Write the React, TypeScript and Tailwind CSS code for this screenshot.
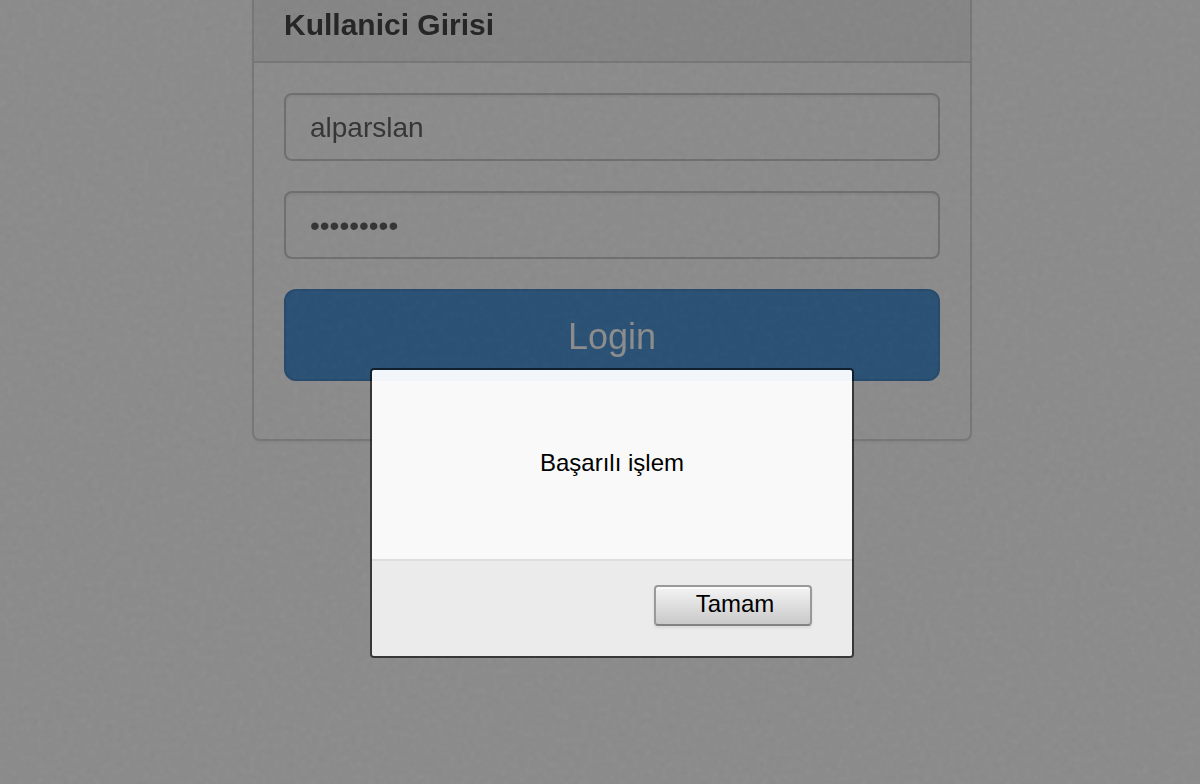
import React, { useState } from "react";

function Grain() {
  return (
    <svg
      aria-hidden="true"
      className="pointer-events-none absolute inset-0 h-full w-full opacity-5 mix-blend-overlay"
    >
      <filter id="grain" x="0" y="0" width="100%" height="100%" colorInterpolationFilters="sRGB">
        <feTurbulence type="fractalNoise" baseFrequency="0.16" numOctaves="3" seed="4" />
        <feColorMatrix type="saturate" values="0" />
        <feComponentTransfer>
          <feFuncA type="linear" slope="0" intercept="1" />
        </feComponentTransfer>
      </filter>
      <rect width="100%" height="100%" filter="url(#grain)" />
    </svg>
  );
}

const fieldClass =
  "block h-[68px] w-full rounded-lg border-2 border-[#6f6f6f] bg-transparent px-6 pt-0.5 text-[28px] text-[#363636] shadow-[inset_0_2px_2px_rgba(0,0,0,0.05)] outline-none";

export default function App() {
  const [open, setOpen] = useState(true);
  const [user, setUser] = useState("alparslan");
  const [password, setPassword] = useState("alparslan");

  return (
    <div className="relative min-h-screen overflow-hidden bg-[#8b8b8b] pl-6 font-['Liberation_Sans',Arial,sans-serif]">
      <main className="mx-auto w-full max-w-[720px] rounded-b-lg border-x-2 border-b-2 border-[#777777] shadow-[0_2px_2px_rgba(0,0,0,0.04)]">
        <header className="border-b-2 border-[#777777] bg-[#858585] px-[30px] pt-1 pb-4">
          <h1 className="text-[30px] leading-[41px] font-bold text-[#262626]">Kullanici Girisi</h1>
        </header>
        <form className="flex flex-col gap-[30px] px-[30px] pt-[30px] pb-[58px]" onSubmit={(e) => e.preventDefault()}>
          <input
            aria-label="Kullanici"
            className={fieldClass}
            type="text"
            value={user}
            onChange={(e) => setUser(e.target.value)}
          />
          <input
            aria-label="Sifre"
            className={fieldClass}
            type="password"
            value={password}
            onChange={(e) => setPassword(e.target.value)}
          />
          <button
            type="submit"
            className="h-[92px] w-full rounded-xl border-2 border-[#274b6c] bg-[#2b5275] pt-1 text-4xl text-[#8c8c8c]"
          >
            Login
          </button>
        </form>
      </main>
      <Grain />
      {open && (
        <div className="absolute inset-0 flex items-start justify-center pt-[368px] pl-6">
          <div
            role="alertdialog"
            aria-modal="true"
            aria-labelledby="message"
            className="w-full max-w-[484px] overflow-hidden rounded-sm border-2 border-black/60 bg-clip-padding"
          >
            <div className="bg-[linear-gradient(#f2f6fb_11px,#f9f9f9_11px)] px-10 pt-[77px] pb-20">
              <p id="message" className="text-center text-2xl text-black">
                Başarılı işlem
              </p>
            </div>
            <div className="flex justify-end border-t-2 border-[#dedede] bg-[#ebebeb] px-10 pt-6 pb-[30px]">
              <button
                type="button"
                onClick={() => setOpen(false)}
                className="h-[41px] w-[158px] rounded-sm border-2 border-[#999999] border-b-[#828282] bg-linear-to-b from-[#f4f4f4] to-[#c9c9c9] pb-1 pl-1 text-2xl leading-8 text-black shadow-[0_2px_3px_rgba(0,0,0,0.08),inset_0_2px_0_rgba(255,255,255,0.6)]"
              >
                Tamam
              </button>
            </div>
          </div>
        </div>
      )}
    </div>
  );
}
